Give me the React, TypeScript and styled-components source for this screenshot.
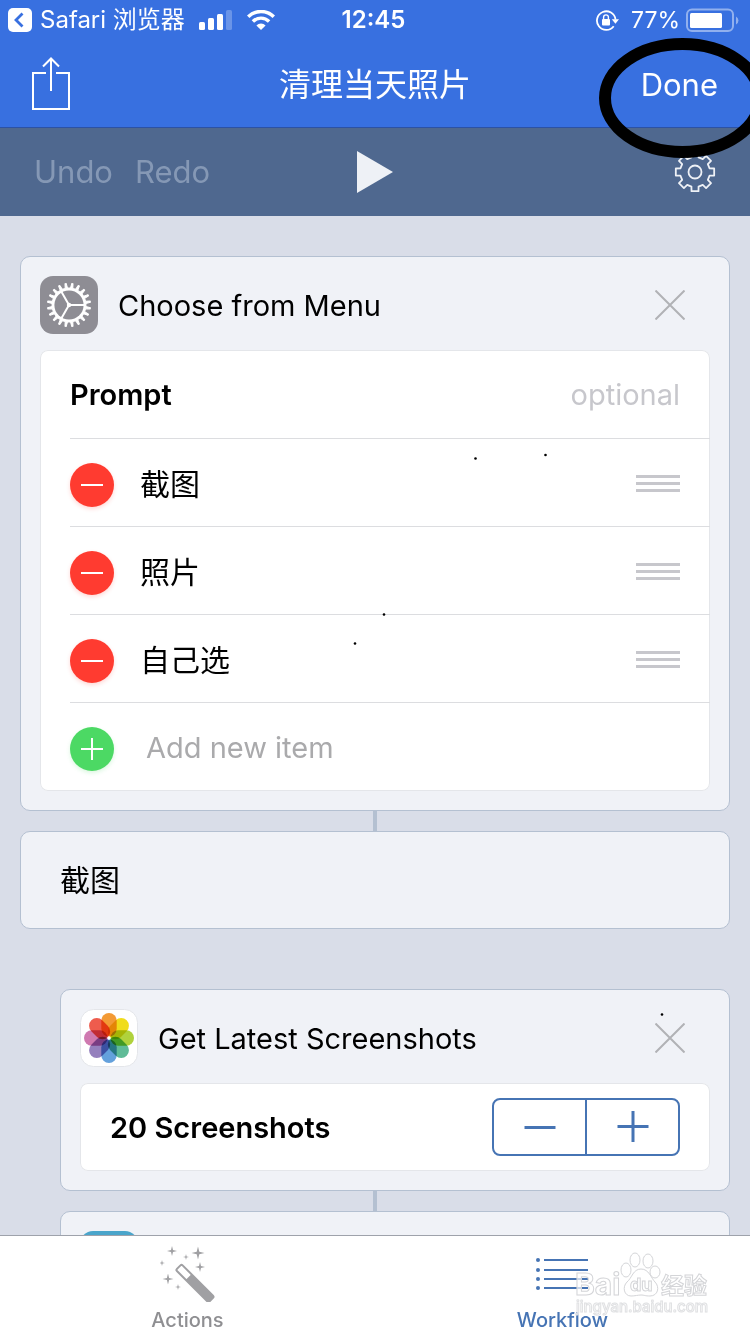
import React from "react";
import styled, { createGlobalStyle, css } from "styled-components";

const Global = createGlobalStyle`
  *, *::before, *::after { box-sizing: border-box; }
  body { margin: 0; background: #d9dde8; }
  button, input { font: inherit; color: inherit; margin: 0; }
  button { padding: 0; border: 0; background: none; cursor: pointer; }
`;

const Page = styled.div`
  position: relative;
  display: flex;
  flex-direction: column;
  height: 100vh;
  overflow: hidden;
  background: #d9dde8;
  color: #000;
  font-family: Inter, "Noto Sans CJK SC", sans-serif;
  font-size: 29px;
  line-height: 40px;
`;

const Header = styled.header`
  flex: none;
  background: #3870e0;
  border-bottom: 1px solid #2c52a4;
  color: #fff;
`;

const StatusBar = styled.div`
  display: grid;
  grid-template-columns: 1fr auto 1fr;
  align-items: center;
  height: 40px;
  padding: 0 11px 0 8px;
  font-size: 24px;
`;

const StatusGroup = styled.div<{ $end?: boolean }>`
  display: flex;
  align-items: center;
  gap: ${(p) => (p.$end ? "6px" : "14px")};
  justify-content: ${(p) => (p.$end ? "flex-end" : "flex-start")};
  white-space: nowrap;
`;

const BackLink = styled.a`
  display: flex;
  align-items: center;
  gap: 8px;
  color: inherit;
  text-decoration: none;
`;

const Charge = styled.span`
  padding-left: 6px;
  font-size: 23px;
`;

const Clock = styled.time`
  font-weight: 600;
`;

const NavBar = styled.div`
  display: grid;
  grid-template-columns: 1fr auto 1fr;
  align-items: center;
  height: 87px;
  padding: 0 32px;
`;

const ShareButton = styled.button`
  display: flex;
  justify-self: start;
`;

const Title = styled.h1`
  margin: 0;
  padding-top: 2px;
  font-size: 32px;
  font-weight: 400;
`;

const DoneButton = styled.button`
  justify-self: end;
  padding-top: 2px;
  font-size: 31px;
`;

const Toolbar = styled.div`
  flex: none;
  display: grid;
  grid-template-columns: 1fr auto 1fr;
  align-items: center;
  height: 88px;
  padding: 0 34px;
  background: #4f688f;
`;

const History = styled.div`
  display: flex;
  gap: 22px;
`;

const HistoryButton = styled.button`
  font-size: 31px;
  color: #8598b5;
`;

const IconButton = styled.button<{ $end?: boolean }>`
  display: flex;
  justify-self: ${(p) => (p.$end ? "end" : "auto")};
`;

const Flow = styled.main`
  flex: 1;
  min-height: 0;
  overflow: hidden auto;
  scrollbar-width: none;
  padding: 40px 20px 0;
`;

const Card = styled.section<{ $nested?: boolean }>`
  margin-left: ${(p) => (p.$nested ? "40px" : "0")};
  padding: 19px;
  border: 1px solid #b4c0d1;
  border-radius: 10px;
  background: #f0f2f7;
`;

const CaseCard = styled(Card)`
  display: flex;
  align-items: center;
  height: 98px;
  margin-bottom: 60px;
  padding: 0 39px;
  font-size: 30px;
`;

const Connector = styled.div`
  width: 4px;
  height: 20px;
  margin: 0 auto;
  background: #b4c0d1;
`;

const CardHead = styled.div`
  display: flex;
  align-items: center;
  gap: 20px;
  margin-bottom: 16px;
  padding-right: 25px;
`;

const CardTitle = styled.h2`
  flex: 1;
  margin: 0;
  padding-top: 2px;
  font-size: 29px;
  font-weight: 400;
`;

const Panel = styled.div`
  border-radius: 8px;
  background: #fff;
  box-shadow: inset 0 0 0 1px #e4e6ea;
`;

const Row = styled.div<{ $last?: boolean }>`
  display: flex;
  align-items: center;
  gap: 26px;
  height: ${(p) => (p.$last ? "89px" : "88px")};
  margin-left: 30px;
  padding: 2px 30px 0 0;
  & + & { border-top: 1px solid #dcdde0; }
`;

const RowLabel = styled.label`
  font-weight: 600;
`;

const fieldBase = css`
  flex: 1;
  min-width: 0;
  width: 0;
  height: 40px;
  padding: 0;
  border: 0;
  outline: 0;
  background: none;
`;

const PromptField = styled.input`
  ${fieldBase}
  text-align: right;
  &::placeholder { color: #c7c7cc; opacity: 1; }
`;

const ItemField = styled.input`
  ${fieldBase}
  font-size: 30px;
`;

const AddField = styled.input`
  ${fieldBase}
  margin-left: 6px;
  &::placeholder { color: #aaaaac; opacity: 1; }
`;

const RoundButton = styled.button<{ $tone: string }>`
  display: flex;
  flex: none;
  margin-top: 2px;
  border-radius: 50%;
  background: ${(p) => p.$tone};
  box-shadow: 0 2px 4px ${(p) => p.$tone}33;
`;

const Stepper = styled.div`
  display: grid;
  grid-template-columns: 91fr 93fr;
  width: 188px;
  height: 58px;
  margin: 0 0 2px auto;
  border: 2px solid #4674b4;
  border-radius: 8px;
`;

const StepButton = styled.button`
  display: flex;
  align-items: center;
  justify-content: center;
  & + & { border-left: 2px solid #4674b4; }
`;

const AppTile = styled.div`
  flex: none;
  width: 58px;
  height: 58px;
  border-radius: 13px;
  background: #4aa5cb;
`;

const TabBar = styled.nav`
  flex: none;
  display: grid;
  grid-template-columns: 1fr 1fr;
  height: 99px;
  border-top: 1px solid #9ea2ab;
  background: #fff;
`;

const Tab = styled.a<{ $active?: boolean }>`
  display: flex;
  flex-direction: column;
  align-items: center;
  gap: 6px;
  padding-top: 8px;
  color: ${(p) => (p.$active ? "#4674b4" : "#8f8f92")};
  font-size: 20px;
  line-height: 24px;
  font-weight: 500;
  text-decoration: none;
`;

const Marks = styled.svg`
  position: absolute;
  top: 0;
  right: 0;
  pointer-events: none;
`;

const Watermark = styled.svg`
  position: absolute;
  right: 36px;
  bottom: 10px;
  pointer-events: none;
`;

const BackIcon = () => (
  <svg width="24" height="24" viewBox="0 0 24 24" aria-hidden>
    <rect width="24" height="24" rx="5" fill="#fff" />
    <path d="M14.500 5.500l-6.500 6.500 6.500 6.500" fill="none" stroke="#3870e0" strokeWidth="2.800" />
  </svg>
);

const SignalIcon = () => (
  <svg width="34" height="20" viewBox="0 0 34 20" fill="#fff" aria-hidden>
    <rect x="0" y="12" width="6" height="8" rx="1.500" />
    <rect x="9" y="8" width="6" height="12" rx="1.500" />
    <rect x="18" y="4" width="6" height="16" rx="1.500" />
    <rect x="27" y="0" width="6" height="20" rx="1.500" opacity=".25" />
  </svg>
);

const WifiIcon = () => (
  <svg width="28" height="20" viewBox="0 0 28 20" aria-hidden>
    <g fill="none" stroke="#fff" strokeWidth="3.400">
      <path d="M1.200 6.800a18 18 0 0 1 25.600 0" />
      <path d="M5.900 11.500a11.400 11.400 0 0 1 16.200 0" />
    </g>
    <path d="M14 20l-4.600-4.600a6.500 6.500 0 0 1 9.200 0z" fill="#fff" />
  </svg>
);

const LockIcon = () => (
  <svg width="23" height="21" viewBox="0 0 23 21" aria-hidden>
    <path d="M17.700 16.200A9.300 9.300 0 1 1 19.500 9.500" fill="none" stroke="#fff" strokeWidth="1.800" />
    <path d="M15.800 9.300h7.200l-3.600 4.400z" fill="#fff" />
    <rect x="6" y="9" width="8" height="6.500" rx="1" fill="#fff" />
    <path d="M7.600 9.500V7.300a2.400 2.400 0 0 1 4.800 0v2.200" fill="none" stroke="#fff" strokeWidth="1.400" />
  </svg>
);

const BatteryIcon = () => (
  <svg width="53" height="24" viewBox="0 0 53 24" aria-hidden>
    <rect x="1" y="1.500" width="46" height="21.500" rx="5" fill="none" stroke="#fff" strokeWidth="2" opacity=".45" />
    <rect x="4" y="5" width="32" height="15" rx="1.500" fill="#fff" />
    <path d="M50 8.500a4.500 4.500 0 0 1 0 8z" fill="#fff" opacity=".45" />
  </svg>
);

const ShareIcon = () => (
  <svg width="38" height="54" viewBox="0 0 38 54" fill="none" stroke="#fff" strokeWidth="2" aria-hidden>
    <path d="M14 16H1v36h36V16H24M19 34V2M11 9.500L19 1.500l8 8" />
  </svg>
);

const PlayIcon = () => (
  <svg width="36" height="42" viewBox="0 0 36 42" aria-hidden>
    <path d="M0 0l36 21L0 42z" fill="#eef1f6" />
  </svg>
);

function cogPath(teeth: number, outer: number, inner: number, wOut: number, wIn: number) {
  const points: string[] = [];
  for (let i = 0; i < teeth; i++) {
    const a = (i * 2 * Math.PI) / teeth;
    const corners = [[inner, -wIn], [outer, -wOut], [outer, wOut], [inner, wIn]];
    for (const [r, d] of corners) {
      points.push(`${(r * Math.cos(a + d)).toFixed(2)} ${(r * Math.sin(a + d)).toFixed(2)}`);
    }
  }
  return `M${points.join("L")}Z`;
}

const GearIcon = () => (
  <svg width="42" height="42" viewBox="-21 -21 42 42" fill="none" stroke="#eef1f6" strokeWidth="1.800" strokeLinejoin="round" aria-hidden>
    <path d={cogPath(8, 19.5, 15, 0.18, 0.24)} />
    <circle r="6.500" />
  </svg>
);

const SettingsTile = () => (
  <svg width="58" height="58" viewBox="-29 -29 58 58" aria-hidden>
    <rect x="-29" y="-29" width="58" height="58" rx="13" fill="#8e8d94" />
    <g transform="rotate(9)">
      <path d={cogPath(20, 21.6, 17, 0.03, 0.07)} fill="#fff" stroke="#fff" strokeLinejoin="round" />
    </g>
    <circle r="14.600" fill="#8e8d94" />
    <path d="M0 0H16M0 0L-8 -13.900M0 0L-8 13.900" stroke="#fff" strokeWidth="2" />
    <circle r="2.200" fill="#fff" />
  </svg>
);

const petals = ["#f39a35", "#f0dc1c", "#b0d23c", "#5fbb97", "#64a1dc", "#9580bd", "#cf79b0", "#ee5c4d"];

const PhotosTile = () => (
  <svg width="58" height="58" viewBox="-29 -29 58 58" aria-hidden>
    <rect x="-28.500" y="-28.500" width="57" height="57" rx="13" fill="#fff" stroke="#e4e6ea" />
    <g style={{ isolation: "isolate" }}>
      {petals.map((color, i) => (
        <rect key={color} x="-7.700" y="-25" width="15.400" height="23.500" rx="7.700" fill={color}
          transform={`rotate(${i * 45})`} style={{ mixBlendMode: "multiply" }} />
      ))}
    </g>
    <circle r="1.500" fill="#fff" />
  </svg>
);

const CloseIcon = () => (
  <svg width="30" height="30" viewBox="0 0 30 30" stroke="#b1b2b6" strokeWidth="2" aria-hidden>
    <path d="M0.500 0.500l29 29M29.500 0.500l-29 29" />
  </svg>
);

const SignIcon = ({ plus }: { plus?: boolean }) => (
  <svg width="44" height="44" viewBox="0 0 44 44" stroke="#fff" strokeWidth="2" aria-hidden>
    <path d={plus ? "M11 22h22M22 11v22" : "M11 22h22"} />
  </svg>
);

const StepIcon = ({ plus }: { plus?: boolean }) => (
  <svg width="32" height="32" viewBox="0 0 32 32" stroke="#4674b4" strokeWidth="3" aria-hidden>
    <path d={plus ? "M0.500 15.500h31M16 0v31" : "M0.500 16.500h31"} />
  </svg>
);

const GripIcon = () => (
  <svg width="44" height="17" viewBox="0 0 44 17" fill="#c7c7cc" aria-hidden>
    <path d="M0 0h44v3H0zM0 7h44v3H0zM0 14h44v3H0z" />
  </svg>
);

const star = (x: number, y: number, r: number) => {
  const k = r * 0.2;
  return `M${x} ${y - r}L${x + k} ${y - k}L${x + r} ${y}L${x + k} ${y + k}L${x} ${y + r}L${x - k} ${y + k}L${x - r} ${y}L${x - k} ${y - k}Z`;
};

const WandIcon = () => (
  <svg width="56" height="58" viewBox="0 0 56 58" fill="#a0a0a3" aria-hidden>
    <path d={[star(12, 7, 5), star(38, 9, 6.5), star(26, 13, 3), star(2, 19, 3), star(40, 23, 5), star(8, 35, 5.5), star(18, 43, 3)].join("")} />
    <g transform="translate(18 21) rotate(45)">
      <rect x="1" y="-4" width="48" height="10" rx="2.500" />
      <rect x="3" y="-2" width="13" height="6" rx="0.500" fill="#fff" />
    </g>
  </svg>
);

const ListIcon = () => (
  <svg width="54" height="58" viewBox="0 0 54 58" aria-hidden>
    {[16, 26, 35, 44].map((y) => (
      <g key={y} fill="#4674b4">
        <circle cx="2" cy={y} r="2" />
        <rect x="8" y={y - 1} width="44" height="2" />
      </g>
    ))}
  </svg>
);

const specks = [[475.5, 458.5], [545.5, 455], [384, 614.5], [355, 643.5], [662, 1014.5]];

const menuItems = ["截图", "照片", "自己选"];

export default function App() {
  return (
    <Page>
      <Global />
      <Header>
        <StatusBar>
          <StatusGroup>
            <BackLink href="#safari"><BackIcon />Safari 浏览器</BackLink>
            <SignalIcon />
            <WifiIcon />
          </StatusGroup>
          <Clock>12:45</Clock>
          <StatusGroup $end>
            <LockIcon />
            <Charge>77%</Charge>
            <BatteryIcon />
          </StatusGroup>
        </StatusBar>
        <NavBar>
          <ShareButton aria-label="Share"><ShareIcon /></ShareButton>
          <Title>清理当天照片</Title>
          <DoneButton>Done</DoneButton>
        </NavBar>
      </Header>
      <Toolbar>
        <History>
          <HistoryButton>Undo</HistoryButton>
          <HistoryButton>Redo</HistoryButton>
        </History>
        <IconButton aria-label="Run"><PlayIcon /></IconButton>
        <IconButton $end aria-label="Settings"><GearIcon /></IconButton>
      </Toolbar>
      <Flow>
        <Card>
          <CardHead>
            <SettingsTile />
            <CardTitle>Choose from Menu</CardTitle>
            <IconButton aria-label="Remove action"><CloseIcon /></IconButton>
          </CardHead>
          <Panel>
            <Row>
              <RowLabel htmlFor="prompt">Prompt</RowLabel>
              <PromptField id="prompt" placeholder="optional" />
            </Row>
            {menuItems.map((item) => (
              <Row key={item}>
                <RoundButton $tone="#ff3b30" aria-label={`Delete ${item}`}><SignIcon /></RoundButton>
                <ItemField aria-label="Menu item" defaultValue={item} />
                <IconButton aria-label={`Reorder ${item}`}><GripIcon /></IconButton>
              </Row>
            ))}
            <Row $last>
              <RoundButton $tone="#4cd964" aria-label="Add"><SignIcon plus /></RoundButton>
              <AddField aria-label="New item" placeholder="Add new item" />
            </Row>
          </Panel>
        </Card>
        <Connector />
        <CaseCard>截图</CaseCard>
        <Card $nested>
          <CardHead>
            <PhotosTile />
            <CardTitle>Get Latest Screenshots</CardTitle>
            <IconButton aria-label="Remove action"><CloseIcon /></IconButton>
          </CardHead>
          <Panel>
            <Row>
              <RowLabel as="span">20 Screenshots</RowLabel>
              <Stepper role="group" aria-label="Screenshots">
                <StepButton aria-label="Fewer"><StepIcon /></StepButton>
                <StepButton aria-label="More"><StepIcon plus /></StepButton>
              </Stepper>
            </Row>
          </Panel>
        </Card>
        <Connector />
        <Card $nested>
          <AppTile />
        </Card>
      </Flow>
      <TabBar>
        <Tab href="#actions"><WandIcon />Actions</Tab>
        <Tab $active href="#workflow"><ListIcon />Workflow</Tab>
      </TabBar>
      <Marks width="750" height="1100" viewBox="0 0 750 1100" aria-hidden>
        <ellipse cx="682.500" cy="98" rx="77.500" ry="54" fill="none" stroke="#000" strokeWidth="12" />
        {specks.map(([x, y]) => <circle key={x} cx={x} cy={y} r="1.300" />)}
      </Marks>
      <Watermark width="140" height="74" viewBox="0 0 140 74" aria-hidden>
        <g fill="#fff" fillOpacity=".75" stroke="#d4d5d8" strokeWidth="1">
          <ellipse cx="61" cy="10" rx="5" ry="7" />
          <ellipse cx="74" cy="11" rx="5" ry="7" />
          <ellipse cx="52" cy="20" rx="5" ry="7" />
          <ellipse cx="81" cy="22" rx="5" ry="6" />
          <path d="M67 19c8 0 10 9 14 13 5 5 3 14-5 14-5 0-6-1-9-1s-6 1-10 1c-7 0-9-9-4-14 5-4 6-13 14-13z" />
        </g>
        <g fill="#fff" fillOpacity=".7" stroke="#d4d5d8" strokeWidth="1" fontFamily="Inter, 'Noto Sans CJK SC', sans-serif" fontWeight="700">
          <text x="1" y="45" fontSize="30">Bai</text>
          <text x="56" y="41" fontSize="18">du</text>
          <text x="87" y="44" fontSize="23">经验</text>
          <text x="2" y="62" fontSize="15" stroke="#e0e1e3" fontWeight="500">jingyan.baidu.com</text>
        </g>
      </Watermark>
    </Page>
  );
}
